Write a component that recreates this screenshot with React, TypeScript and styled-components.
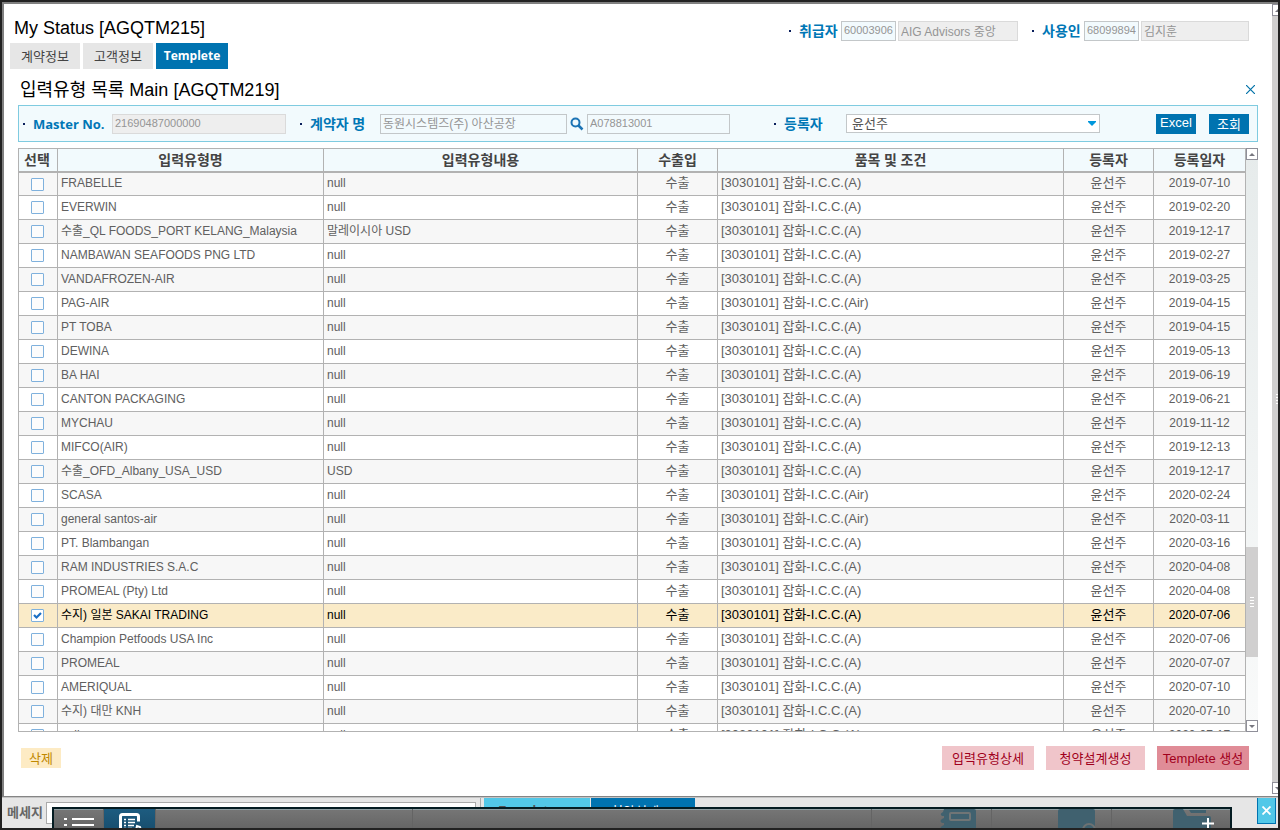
import React from "react";
import styled, { createGlobalStyle, css } from "styled-components";

const Global = createGlobalStyle`
  * { box-sizing: border-box; }
  body { margin: 0; }
  body, button, input, select {
    font-family: "Liberation Sans", "Noto Sans CJK KR", sans-serif;
    font-size: 13px;
  }
`;

const boldFont = css`
  font-family: "Open Sans", "Noto Sans CJK KR", sans-serif;
  font-weight: 700;
`;

const Frame = styled.div`
  height: 100vh;
  min-height: 400px;
  display: flex;
  flex-direction: column;
  position: relative;
  overflow: hidden;
  border: 2px solid #222;
`;

const Workspace = styled.div`
  flex: 1;
  min-height: 0;
  display: flex;
  background: #fff;
  border-top: 2px solid #808080;
  border-left: 2px solid #808080;
  border-bottom: 1px solid #858585;
`;

const Page = styled.main`
  flex: 1;
  min-width: 0;
  display: flex;
  flex-direction: column;
  padding: 0 14px 26px;
`;

const PageHead = styled.header`
  display: flex;
  justify-content: space-between;
  align-items: flex-start;
  height: 39px;
  margin-left: -4px;
  padding: 11px 9px 0 0;
`;

const Title = styled.h1`
  margin: 0;
  padding: 2px 0 0 0;
  font-size: 18px;
  font-weight: 400;
  line-height: 22px;
  color: #000;
`;

const Subtitle = styled(Title).attrs({ as: "h2" })`
  padding: 0;
`;

const Fields = styled.div`
  display: flex;
  align-items: center;
  padding-top: 6px;
`;

const Label = styled.label<{ $w: number; $latin?: boolean }>`
  ${boldFont}
  flex: none;
  width: ${(p) => p.$w}px;
  display: flex;
  align-items: center;
  gap: 8px;
  font-size: ${(p) => (p.$latin ? 13 : 14)}px;
  line-height: 18px;
  color: #0077b6;
  white-space: nowrap;
  &::before {
    content: "";
    width: 2px;
    height: 2px;
    background: #0a1f5c;
  }
`;

const TextBox = styled.input<{ $w: number; $gap?: number; $locked?: boolean; $code?: boolean }>`
  width: ${(p) => p.$w}px;
  height: 20px;
  min-width: 0;
  margin-right: ${(p) => p.$gap ?? 0}px;
  padding: 0 2px 2px;
  font-size: ${(p) => (p.$code ? 11 : 12)}px;
  color: #959595;
  background: ${(p) => (p.$locked ? "#eee" : "#f2fafd")};
  border: 1px solid ${(p) => (p.$locked ? "#dadada" : "#c3c7c9")};
  border-radius: 0;
  outline: 0;
`;

const Tabs = styled.nav`
  display: flex;
  gap: 3px;
  margin-left: -8px;
`;

const Tab = styled.button<{ $active?: boolean }>`
  height: 26px;
  width: 70px;
  padding: 0 0 2px;
  border: 0;
  background: #e6e6e6;
  color: #444;
  ${(p) =>
    p.$active &&
    css`
      ${boldFont}
      width: 72px;
      font-size: 12px;
      background: #0073b0;
      color: #fff;
    `}
`;

const SectionHead = styled.div`
  display: flex;
  justify-content: space-between;
  align-items: center;
  height: 36px;
  padding: 5px 3px 0 2px;
`;

const IconButton = styled.button<{ $w: number }>`
  width: ${(p) => p.$w}px;
  padding: 0;
  border: 0;
  background: none;
  display: grid;
  place-items: center;
`;

const FilterBar = styled.form`
  flex: none;
  display: flex;
  align-items: center;
  height: 37px;
  padding: 0 8px 0 4px;
  background: #f2fafd;
  border: 1px solid #7fcbe0;
`;

const SelectWrap = styled.div`
  position: relative;
  width: 254px;
  svg {
    position: absolute;
    right: 4px;
    top: 7px;
    pointer-events: none;
  }
`;

const Select = styled.select`
  display: block;
  width: 100%;
  height: 19px;
  padding: 0 5px;
  appearance: none;
  color: #555;
  background: #fff;
  border: 1px solid #c3c7c9;
  border-radius: 0;
`;

const FilterActions = styled.div`
  display: flex;
  gap: 13px;
  margin-left: auto;
`;

const BlueButton = styled.button`
  width: 40px;
  height: 20px;
  padding: 0 0 2px;
  border: 0;
  color: #fff;
  background: #0073b0;
`;

const Grid = styled.div`
  flex: 1;
  min-height: 0;
  margin-top: 6px;
  display: flex;
`;

const GridView = styled.div`
  flex: 1;
  min-width: 0;
  overflow: hidden;
  border: 1px solid #b2b2b2;
  border-right: 0;
`;

const Table = styled.table`
  width: 100%;
  table-layout: fixed;
  border-spacing: 0;
`;

const Th = styled.th`
  ${boldFont}
  height: 24px;
  padding: 0;
  font-size: 14px;
  line-height: 20px;
  color: #444;
  background: #f2fafd;
  border-right: 1px solid #b2b2b2;
  border-bottom: 2px solid #b2b2b2;
  &:first-child {
    padding-right: 2px;
  }
`;

const Td = styled.td<{ $center?: boolean; $small?: boolean }>`
  height: 24px;
  padding: 0 3px 2px;
  line-height: 20px;
  overflow: hidden;
  white-space: nowrap;
  font-size: ${(p) => (p.$small ? 12 : 13)}px;
  text-align: ${(p) => (p.$center ? "center" : "left")};
  border-right: 1px solid #b2b2b2;
  border-bottom: 1px solid #b2b2b2;
`;

const Row = styled.tr<{ $selected: boolean }>`
  color: ${(p) => (p.$selected ? "#000" : "#606060")};
  background: ${(p) => (p.$selected ? "#faebc8" : "#fff")};
  &:nth-child(odd) {
    background: ${(p) => (p.$selected ? "#faebc8" : "#f7f7f7")};
  }
  &:first-child td {
    height: 23px;
  }
`;

const Check = styled.input`
  appearance: none;
  display: block;
  width: 13px;
  height: 13px;
  margin: 2px 0 0 9px;
  border: 1px solid #7fb1dd;
  border-radius: 1px;
  background: #fcfcfc;
  &:checked {
    background: #fff
      url("data:image/svg+xml,%3Csvg xmlns='http://www.w3.org/2000/svg' viewBox='0 0 11 11'%3E%3Cpath d='M2 5l2.500 2.500L9 3' fill='none' stroke='%231a6fc4' stroke-width='2.200'/%3E%3C/svg%3E");
  }
`;

const ScrollBar = styled.div`
  flex: none;
  width: 12px;
  display: flex;
  flex-direction: column;
  background: linear-gradient(#e6ebeb, #f9fafa);
`;

const PageScrollBar = styled(ScrollBar)`
  width: 6px;
  overflow: hidden;
  background: #fff;
  padding-bottom: 2px;
`;

const ScrollButton = styled.button`
  flex: none;
  width: 12px;
  height: 12px;
  padding: 0;
  display: grid;
  place-items: center;
  background: #fff;
  border: 1px solid #8f8f99;
`;

const Spacer = styled.div<{ $grow: number }>`
  flex: ${(p) => p.$grow};
`;

const Thumb = styled.div<{ $grow: number }>`
  flex: ${(p) => p.$grow};
  width: 12px;
  display: grid;
  place-items: center;
  background: #d0cfcf;
`;

const Footer = styled.div`
  display: flex;
  align-items: center;
  justify-content: space-between;
  padding: 14px 9px 0 3px;
`;

const PinkGroup = styled.div`
  display: flex;
  gap: 12px;
`;

const PinkButton = styled.button<{ $w: number; $focus?: boolean }>`
  width: ${(p) => p.$w}px;
  height: 24px;
  padding: 0 0 2px;
  border: 0;
  color: #a0001c;
  background: ${(p) => (p.$focus ? "#e08c97" : "#f0c5ca")};
`;

const DeleteButton = styled.button`
  width: 40px;
  height: 20px;
  padding: 0 0 2px;
  border: 0;
  color: #c08800;
  background: #fdebc4;
`;

const StatusBar = styled.footer`
  flex: none;
  height: 31px;
  display: flex;
  align-items: flex-start;
  padding-left: 5px;
  background: #e6e6e6;
  border-top: 1px solid #c4c4c4;
`;

const StatusLabel = styled.label`
  ${boldFont}
  width: 39px;
  line-height: 28px;
  color: #666;
`;

const StatusInput = styled.input`
  width: 430px;
  height: 22px;
  margin-top: 4px;
  border: 1px solid #aaa;
  background: #fff;
`;

const TaskTabs = styled.div`
  display: flex;
  gap: 1px;
  height: 30px;
  margin-left: 4px;
  padding-left: 3px;
  border-left: 1px solid #aaa;
`;

const TaskTab = styled.button<{ $active?: boolean }>`
  width: ${(p) => (p.$active ? 106 : 104)}px;
  height: 24px;
  padding: 0 14px 0 15px;
  text-align: left;
  border: 0;
  color: ${(p) => (p.$active ? "#555" : "#fff")};
  background: ${(p) => (p.$active ? "#52c8e8" : "#0073b0")};
  ${(p) => p.$active && boldFont}
  font-size: ${(p) => (p.$active ? 12 : 13)}px;
  span {
    display: block;
    padding-left: ${(p) => (p.$active ? 0 : 5)}px;
  }
`;

const CloseTask = styled.button`
  width: 19px;
  height: 26px;
  margin: 0 2px 0 auto;
  padding: 0;
  display: grid;
  place-items: center;
  border: 1px solid #0073b0;
  border-top: 0;
  background: #52c8e8;
`;

const Dock = styled.div`
  position: absolute;
  left: 50px;
  right: 46px;
  bottom: -2px;
  height: 23px;
  display: flex;
  overflow: hidden;
  border: 2px solid #041c22;
  border-bottom: 0;
  background: linear-gradient(#767676, #646464);
  box-shadow: inset 0 1px #8f9ea2;
`;

const DockItem = styled.button<{ $w: number; $active?: boolean; $end?: boolean }>`
  flex: ${(p) => (p.$w ? "none" : "1")};
  width: ${(p) => p.$w}px;
  height: 21px;
  padding: 0 ${(p) => (p.$end ? 15 : 0)}px 0 0;
  display: flex;
  align-items: flex-start;
  justify-content: ${(p) => (p.$end ? "flex-end" : "center")};
  border: 0;
  border-right: 1px solid #646464;
  background: ${(p) => (p.$active ? "linear-gradient(#1d5c80, #184e6e)" : "none")};
  &:last-child {
    border-right: 0;
  }
`;

const rows: [string, string, string, string][] = [
  ["FRABELLE", "null", "A", "2019-07-10"],
  ["EVERWIN", "null", "A", "2019-02-20"],
  ["수출_QL FOODS_PORT KELANG_Malaysia", "말레이시아 USD", "A", "2019-12-17"],
  ["NAMBAWAN SEAFOODS PNG LTD", "null", "A", "2019-02-27"],
  ["VANDAFROZEN-AIR", "null", "A", "2019-03-25"],
  ["PAG-AIR", "null", "Air", "2019-04-15"],
  ["PT TOBA", "null", "A", "2019-04-15"],
  ["DEWINA", "null", "A", "2019-05-13"],
  ["BA HAI", "null", "A", "2019-06-19"],
  ["CANTON PACKAGING", "null", "A", "2019-06-21"],
  ["MYCHAU", "null", "A", "2019-11-12"],
  ["MIFCO(AIR)", "null", "A", "2019-12-13"],
  ["수출_OFD_Albany_USA_USD", "USD", "A", "2019-12-17"],
  ["SCASA", "null", "Air", "2020-02-24"],
  ["general santos-air", "null", "Air", "2020-03-11"],
  ["PT. Blambangan", "null", "A", "2020-03-16"],
  ["RAM INDUSTRIES S.A.C", "null", "A", "2020-04-08"],
  ["PROMEAL (Pty) Ltd", "null", "A", "2020-04-08"],
  ["수지) 일본 SAKAI TRADING", "null", "A", "2020-07-06"],
  ["Champion Petfoods USA Inc", "null", "A", "2020-07-06"],
  ["PROMEAL", "null", "A", "2020-07-07"],
  ["AMERIQUAL", "null", "A", "2020-07-10"],
  ["수지) 대만 KNH", "null", "A", "2020-07-10"],
  ["null", "null", "A", "2020-07-17"],
];
const SELECTED = 18;

const Arrow = ({ down }: { down?: boolean }) => (
  <svg width="6" height="3" viewBox="0 0 6 3">
    <path d={down ? "M0 0h6L3 3z" : "M0 3h6L3 0z"} fill="#77777f" />
  </svg>
);

const Grip = () => (
  <svg width="4" height="10" viewBox="0 0 4 10">
    <path d="M0 .5h4M0 3.500h4M0 6.500h4M0 9.500h4" stroke="#fff" />
  </svg>
);

export default function App() {
  return (
    <>
      <Global />
      <Frame>
        <Workspace>
          <Page>
            <PageHead>
              <Title>My Status [AGQTM215]</Title>
              <Fields>
                <Label $w={52} htmlFor="handler">취급자</Label>
                <TextBox id="handler" $w={55} $gap={2} $code defaultValue="60003906" />
                <TextBox aria-label="취급자 소속" $w={120} $gap={14} $locked readOnly value="AIG Advisors 중앙" />
                <Label $w={52} htmlFor="agent">사용인</Label>
                <TextBox id="agent" $w={55} $gap={2} $code defaultValue="68099894" />
                <TextBox aria-label="사용인 이름" $w={108} $locked readOnly value="김지훈" />
              </Fields>
            </PageHead>
            <Tabs>
              <Tab>계약정보</Tab>
              <Tab>고객정보</Tab>
              <Tab $active>Templete</Tab>
            </Tabs>
            <SectionHead>
              <Subtitle>입력유형 목록 Main [AGQTM219]</Subtitle>
              <IconButton $w={9} aria-label="닫기">
                <svg width="9" height="9" viewBox="0 0 9 9">
                  <path d="M0 0l9 9M9 0l-9 9" stroke="#0072a8" strokeWidth="1.200" />
                </svg>
              </IconButton>
            </SectionHead>
            <FilterBar onSubmit={(e) => e.preventDefault()}>
              <Label $w={89} $latin htmlFor="master">Master No.</Label>
              <TextBox id="master" $w={174} $gap={14} $locked $code readOnly value="21690487000000" />
              <Label $w={80} htmlFor="holder">계약자 명</Label>
              <TextBox id="holder" $w={187} defaultValue="동원시스템즈(주) 아산공장" />
              <IconButton $w={20} type="button" aria-label="검색">
                <svg width="14" height="14" viewBox="0 0 14 14" fill="none" stroke="#1d74b5">
                  <circle cx="5.500" cy="5.500" r="4" strokeWidth="2" />
                  <path d="M8.500 8.500l4 4" strokeWidth="2.500" />
                </svg>
              </IconButton>
              <TextBox aria-label="계약자 번호" $w={143} $gap={44} $code defaultValue="A078813001" />
              <Label $w={72} htmlFor="writer">등록자</Label>
              <SelectWrap>
                <Select id="writer">
                  <option>윤선주</option>
                </Select>
                <svg width="8" height="5" viewBox="0 0 8 5">
                  <path d="M0 0h8v1L4 5 0 1z" fill="#0097dc" />
                </svg>
              </SelectWrap>
              <FilterActions>
                <BlueButton type="button">Excel</BlueButton>
                <BlueButton>조회</BlueButton>
              </FilterActions>
            </FilterBar>
            <Grid>
              <GridView>
                <Table>
                  <colgroup>
                    <col width="39" />
                    <col width="266" />
                    <col width="314" />
                    <col width="80" />
                    <col />
                    <col width="90" />
                    <col width="92" />
                  </colgroup>
                  <thead>
                    <tr>
                      {["선택", "입력유형명", "입력유형내용", "수출입", "품목 및 조건", "등록자", "등록일자"].map((h) => (
                        <Th key={h}>{h}</Th>
                      ))}
                    </tr>
                  </thead>
                  <tbody>
                    {rows.map(([name, content, clause, date], i) => (
                      <Row key={i} $selected={i === SELECTED}>
                        <Td $center>
                          <Check type="checkbox" aria-label={name} defaultChecked={i === SELECTED} />
                        </Td>
                        <Td $small>{name}</Td>
                        <Td $small>{content}</Td>
                        <Td $center>수출</Td>
                        <Td>{`[3030101] 잡화-I.C.C.(${clause})`}</Td>
                        <Td $center>윤선주</Td>
                        <Td $center $small>{date}</Td>
                      </Row>
                    ))}
                  </tbody>
                </Table>
              </GridView>
              <ScrollBar>
                <ScrollButton aria-label="위로"><Arrow /></ScrollButton>
                <Spacer $grow={387} />
                <Thumb $grow={110}><Grip /></Thumb>
                <Spacer $grow={63} />
                <ScrollButton aria-label="아래로"><Arrow down /></ScrollButton>
              </ScrollBar>
            </Grid>
            <Footer>
              <DeleteButton>삭제</DeleteButton>
              <PinkGroup>
                <PinkButton $w={92}>입력유형상세</PinkButton>
                <PinkButton $w={99}>청약설계생성</PinkButton>
                <PinkButton $w={92} $focus>Templete 생성</PinkButton>
              </PinkGroup>
            </Footer>
          </Page>
          <PageScrollBar>
            <ScrollButton aria-label="페이지 위로"><Arrow /></ScrollButton>
            <Thumb $grow={1}><Grip /></Thumb>
            <ScrollButton aria-label="페이지 아래로"><Arrow down /></ScrollButton>
          </PageScrollBar>
        </Workspace>
        <StatusBar>
          <StatusLabel htmlFor="message">메세지</StatusLabel>
          <StatusInput id="message" />
          <TaskTabs>
            <TaskTab $active><span>Templete</span></TaskTab>
            <TaskTab><span>청약설계</span></TaskTab>
          </TaskTabs>
          <CloseTask aria-label="작업 닫기">
            <svg width="9" height="9" viewBox="0 0 9 9">
              <path d="M.5 .5l8 8M8.500 .5l-8 8" stroke="#fff" strokeWidth="1.800" />
            </svg>
          </CloseTask>
        </StatusBar>
        <Dock>
          <DockItem $w={50} aria-label="목록">
            <svg width="32" height="21" viewBox="0 0 32 21">
              <path d="M1 10h3M1 16h3M9 10h22M9 16h22" stroke="#fff" strokeWidth="2" />
            </svg>
          </DockItem>
          <DockItem $w={52} $active aria-label="문서">
            <svg width="24" height="21" viewBox="0 0 24 21" fill="none" stroke="#fff">
              <path d="M2.500 21V7.500q0-2 2-2h14q2 0 2 2v5" strokeWidth="3" />
              <path d="M6 10.500h2M10 10.500h7M6 13.500h2M10 13.500h7M6 16.500h2M10 16.500h6M6 19.500h2M10 19.500h4" strokeWidth="1.500" />
              <path d="M18 21l1-4 3 1 1 3" strokeWidth="2" />
            </svg>
          </DockItem>
          <DockItem $w={257} aria-label="빈 항목" />
          <DockItem $w={0} aria-label="빈 항목" />
          <DockItem $w={120} $end aria-label="노트">
            <svg width="36" height="21" viewBox="0 0 36 21">
              <path d="M4 0h30q2 0 2 2v19H2q-3-2 0-4l2-1v-2H2q-3-2 0-4l2-1V7H2Q-1 5 3 3z" fill="#40616f" />
              <rect x="10" y="4" width="20" height="7" rx="1" fill="none" stroke="#707576" strokeWidth="2" />
            </svg>
          </DockItem>
          <DockItem $w={120} $end aria-label="검색 문서">
            <svg width="38" height="21" viewBox="0 0 38 21">
              <path d="M0 2q0-2 2-2h33q2 0 2 2v19H0z" fill="#40616f" />
              <circle cx="31" cy="21" r="6" fill="none" stroke="#6d7172" strokeWidth="2" />
            </svg>
          </DockItem>
          <DockItem $w={118} $end aria-label="추가">
            <svg width="42" height="21" viewBox="0 0 42 21">
              <path d="M0 2q0-2 2-2h8l4 7h22q2 0 2 2v12H0z" fill="#40616f" />
              <path d="M16 1h17v3H18z" fill="#40616f" />
              <path d="M29 14.500h12M35 9v12" stroke="#fff" strokeWidth="2" />
            </svg>
          </DockItem>
        </Dock>
      </Frame>
    </>
  );
}
